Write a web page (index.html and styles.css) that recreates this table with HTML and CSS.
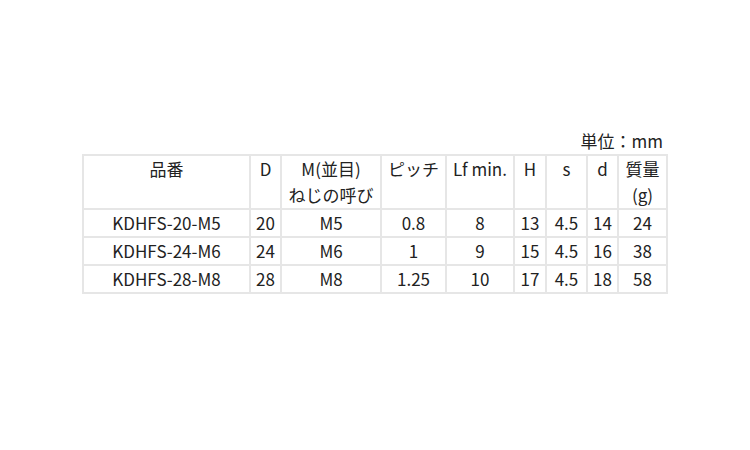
FILE: index.html
```html
<!DOCTYPE html>
<html lang="ja">
<head>
<meta charset="utf-8">
<link rel="stylesheet" href="styles.css">
</head>
<body>
<div class="wrap">
  <div class="unit">単位：mm</div>
  <table class="spec">
    <colgroup>
      <col class="c1"><col class="c2"><col class="c3"><col class="c4"><col class="c5"><col class="c6"><col class="c7"><col class="c8"><col class="c9">
    </colgroup>
    <tr class="head">
      <td>品番</td><td>D</td><td>M(並目)<br>ねじの呼び</td><td>ピッチ</td><td>Lf min.</td><td>H</td><td>s</td><td>d</td><td>質量<br>(g)</td>
    </tr>
    <tr><td>KDHFS-20-M5</td><td>20</td><td>M5</td><td>0.8</td><td>8</td><td>13</td><td>4.5</td><td>14</td><td>24</td></tr>
    <tr><td>KDHFS-24-M6</td><td>24</td><td>M6</td><td>1</td><td>9</td><td>15</td><td>4.5</td><td>16</td><td>38</td></tr>
    <tr><td>KDHFS-28-M8</td><td>28</td><td>M8</td><td>1.25</td><td>10</td><td>17</td><td>4.5</td><td>18</td><td>58</td></tr>
  </table>
</div>
</body>
</html>
```
FILE: styles.css
```css
html, body {
  margin: 0;
  padding: 0;
  background: #fff;
}
body {
  font-family: "Noto Sans CJK JP", "Noto Sans", sans-serif;
  font-size: 17px;
  color: #222;
}
.wrap {
  width: 586px;
  margin: 0 auto;
  padding-top: 128px;
}
.unit {
  text-align: right;
  line-height: 26px;
  height: 26px;
  padding-right: 5px;
}
.spec {
  border-collapse: collapse;
  width: 586px;
  table-layout: fixed;
}
.spec td {
  border: 2px solid #e6e6e6;
  text-align: center;
  vertical-align: top;
  line-height: 26px;
  padding: 0;
  white-space: nowrap;
}
.c1 { width: 167px; }
.c2 { width: 31px; }
.c3 { width: 100px; }
.c4 { width: 65px; }
.c5 { width: 68px; }
.c6 { width: 32px; }
.c7 { width: 41px; }
.c8 { width: 31px; }
.c9 { width: 49px; }
```
